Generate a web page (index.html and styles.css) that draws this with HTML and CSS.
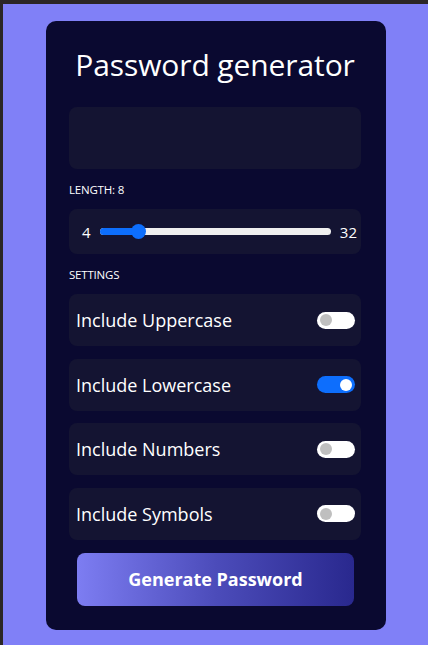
FILE: index.html
```html
<!DOCTYPE html>
<html lang="en">
<head>
<meta charset="utf-8">
<title>Password generator</title>
<link rel="stylesheet" href="styles.css">
</head>
<body>
<div class="frame">
  <main class="card">
    <h1 class="title">Password generator</h1>
    <div class="output"></div>
    <div class="label">LENGTH: 8</div>
    <div class="box slider-box">
      <span class="num">4</span>
      <div class="range">
        <div class="range-fill"></div>
        <div class="range-thumb"></div>
      </div>
      <span class="num">32</span>
    </div>
    <div class="label">SETTINGS</div>
    <div class="settings">
      <div class="box row"><span>Include Uppercase</span><span class="switch"></span></div>
      <div class="box row"><span>Include Lowercase</span><span class="switch on"></span></div>
      <div class="box row"><span>Include Numbers</span><span class="switch"></span></div>
      <div class="box row"><span>Include Symbols</span><span class="switch"></span></div>
    </div>
    <button class="generate">Generate Password</button>
  </main>
</div>
</body>
</html>
```
FILE: styles.css
```css
html, body {
  margin: 0;
  padding: 0;
}
body {
  font-family: "Open Sans", "Noto Sans", sans-serif;
  color: #ffffff;
  background: #8080f7;
}
.frame {
  min-height: 645px;
  box-sizing: border-box;
  border-top: 4px solid #2b2626;
  border-left: 3px solid #2b2626;
  background: #8080f7;
  padding: 17px 0 0 43px;
}
.card {
  width: 340px;
  box-sizing: border-box;
  background: #0a0930;
  border-radius: 10px;
  padding: 24px 25px 24px 23px;
  display: flex;
  flex-direction: column;
}
.title {
  margin: 0 0 22px;
  font-weight: 400;
  font-size: 30px;
  line-height: 40px;
  text-align: center;
  letter-spacing: -0.1px;
}
.output {
  height: 62px;
  background: #141432;
  border-radius: 8px;
}
.label {
  font-size: 11.5px;
  line-height: 20px;
  margin: 11px 0 9px;
  letter-spacing: -0.2px;
}
.box {
  background: #141432;
  border-radius: 8px;
}
.slider-box {
  height: 45px;
  display: flex;
  align-items: center;
  padding: 0 4px 0 13px;
  gap: 9px;
}
.num {
  font-size: 15px;
}
.range {
  flex: 1;
  height: 7px;
  border-radius: 4px;
  background: #efefef;
  position: relative;
}
.range-fill {
  width: 38px;
  height: 100%;
  border-radius: 4px;
  background: #0d6efd;
}
.range-thumb {
  position: absolute;
  left: 31px;
  top: -4px;
  width: 15px;
  height: 15px;
  border-radius: 50%;
  background: #0d6efd;
}
.settings {
  display: flex;
  flex-direction: column;
  gap: 12.5px;
}
.row {
  height: 52px;
  display: flex;
  align-items: center;
  justify-content: space-between;
  padding: 0 6px 0 7px;
  font-size: 18px;
}
.switch {
  width: 38px;
  height: 17px;
  border-radius: 9px;
  background: #ffffff;
  position: relative;
}
.switch::after {
  content: "";
  position: absolute;
  left: 3px;
  top: 2.5px;
  width: 12px;
  height: 12px;
  border-radius: 50%;
  background: #bfbfbf;
}
.switch.on {
  background: #0d6efd;
}
.switch.on::after {
  left: auto;
  right: 3px;
  background: #ffffff;
}
.generate {
  margin: 13px 7px 0 8px;
  height: 53px;
  border: 0;
  border-radius: 8px;
  background: linear-gradient(90deg, #7d7df2 0%, #4c4cba 50%, #29288e 100%);
  color: #ffffff;
  font-family: "Open Sans", "Noto Sans", sans-serif;
  font-weight: 700;
  font-size: 18px;
}
```
